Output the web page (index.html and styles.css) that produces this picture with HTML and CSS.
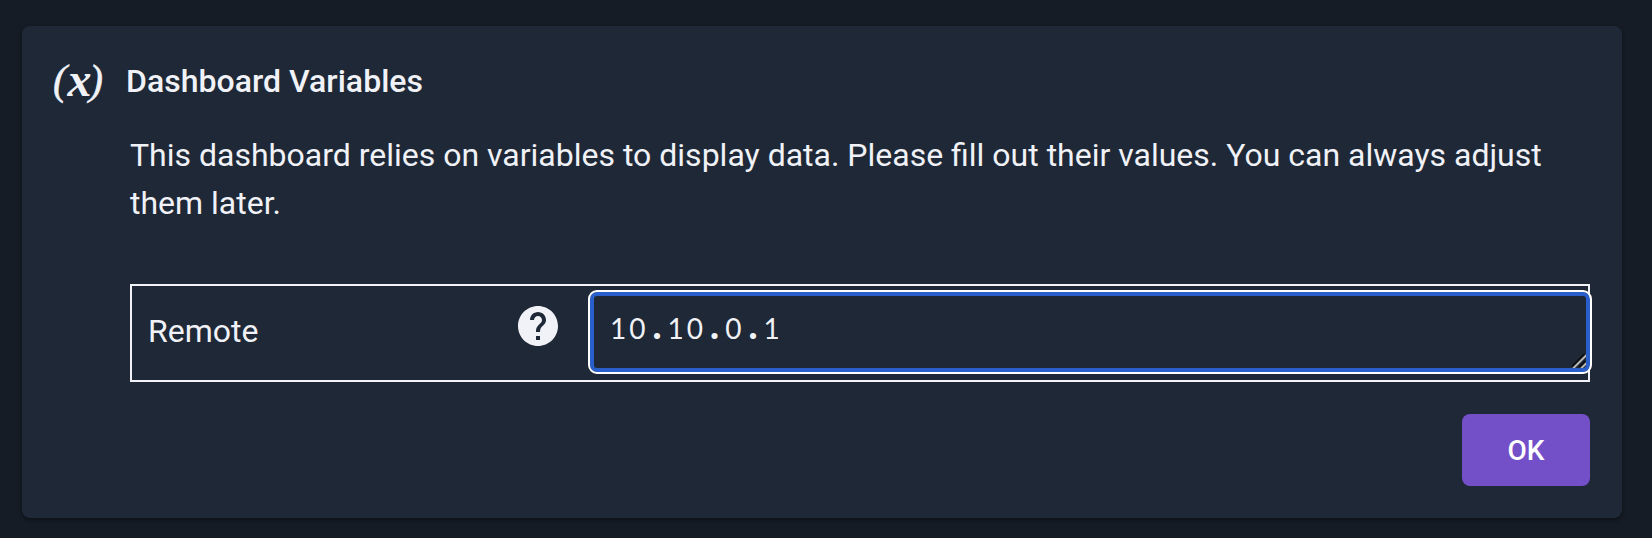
FILE: index.html
```html
<!DOCTYPE html>
<html lang="en">
<head>
<meta charset="utf-8">
<title>Dashboard Variables</title>
<link rel="stylesheet" href="styles.css">
</head>
<body>
<main class="card">
  <header class="card-header">
    <span class="var-icon"><span class="paren">(</span><span class="var-x">x</span><span class="paren">)</span></span>
    <h1 class="title">Dashboard Variables</h1>
  </header>
  <section class="content">
    <p class="description">This dashboard relies on variables to display data. Please fill out their values. You can always adjust them later.</p>
    <div class="variable-row">
      <label class="variable-name">Remote</label>
      <svg class="help-icon" viewBox="0 0 24 24"><path d="M12 2C6.48 2 2 6.48 2 12s4.48 10 10 10 10-4.48 10-10S17.52 2 12 2zm1 17h-2v-2h2v2zm2.07-7.75l-.9.92C13.45 12.9 13 13.5 13 15h-2v-.5c0-1.1.45-2.1 1.17-2.83l1.24-1.26c.37-.36.59-.86.59-1.41 0-1.1-.9-2-2-2s-2 .9-2 2H8c0-2.21 1.79-4 4-4s4 1.79 4 4c0 .88-.36 1.68-.93 2.25z"/></svg>
      <div class="field">
        <div class="field-value">10<span class="dot">.</span>10<span class="dot">.</span>0<span class="dot">.</span>1</div>
        <svg class="resizer" viewBox="0 0 14 14"><path class="resizer-shade" d="M0 14L14 0M8 14L14 8"/><path class="resizer-line" d="M1 14.5L14.5 1M9 14.5L14.5 9"/></svg>
      </div>
    </div>
    <div class="actions"><button class="ok">OK</button></div>
  </section>
</main>
</body>
</html>
```
FILE: styles.css
```css
* { box-sizing: border-box; }
body {
  margin: 0;
  padding: 26px 30px 20px 22px;
  height: 538px;
  background: #151c25;
  color: #f0f2f7;
  font: 400 32px/48px Roboto, sans-serif;
  overflow: hidden;
}
.card {
  height: 492px;
  padding: 30px 32px 32px;
  border-radius: 8px;
  background: #1f2836;
  box-shadow: 0 2px 4px rgba(0, 0, 0, 0.4);
}
.card-header { display: flex; height: 52px; }
.var-icon {
  display: flex;
  width: 73px;
  margin-left: -1px;
  font-family: "Liberation Serif", serif;
  font-style: italic;
  line-height: 48px;
}
.paren { font-size: 42px; -webkit-text-stroke: 0.5px #f0f2f7; }
.var-x { width: 22px; font-size: 48px; font-weight: 700; text-indent: 0.5px; }
.title { margin: 0; font-size: 32px; font-weight: 500; line-height: 50px; letter-spacing: 0.03px; }
.content { padding-left: 76px; }
.description { margin: 23px 0 0; }
.variable-row {
  display: flex;
  height: 98px;
  margin-top: 57px;
  border: 2px solid #f0f2f7;
}
.variable-name { width: 382px; padding: 21px 0 0 16px; }
.help-icon { width: 48px; height: 48px; margin-top: 16px; fill: #f0f2f7; }
.field {
  position: relative;
  flex: none;
  width: 1004px;
  height: 84px;
  margin: 4px -4px 0 26px;
  padding: 12px 14px;
  border: 2px solid #fff;
  border-radius: 9px;
  box-shadow: inset 0 0 0 4px #285fcb;
}
.field-value {
  padding-left: 6px;
  font-family: Lato, sans-serif;
  font-size: 28px;
  line-height: 48px;
  letter-spacing: 2.96px;
}
.dot {
  display: inline-block;
  width: 19.2px;
  margin-left: -1px;
  margin-right: 1px;
  text-align: center;
  font-weight: 700;
  font-size: 40px;
  line-height: 30px;
  letter-spacing: 0;
}
.resizer { position: absolute; right: 4px; bottom: 4px; width: 14px; height: 14px; fill: none; }
.resizer-shade { stroke: #0b0e12; stroke-width: 4; }
.resizer-line { stroke: #b8b8b8; stroke-width: 2; }
.actions { display: flex; justify-content: flex-end; margin-top: 32px; }
.ok {
  width: 128px;
  height: 72px;
  padding: 1px 0 0;
  border: 0;
  border-radius: 8px;
  background: #734fc8;
  color: #fff;
  font: 500 28px/71px Roboto, sans-serif;
}
```
